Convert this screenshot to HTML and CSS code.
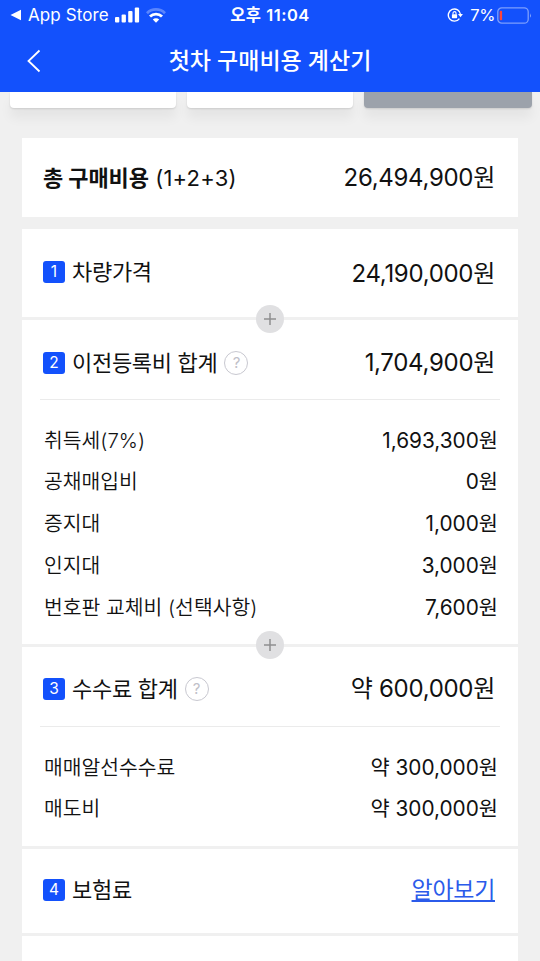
FILE: index.html
```html
<!DOCTYPE html>
<html lang="ko">
<head>
  <meta charset="utf-8">
  <title>첫차 구매비용 계산기</title>
  <link rel="stylesheet" href="styles.css">
</head>

<body>
  <header class="header">
    <div class="status-bar">
      <div class="status-left">
        <svg class="back-app" width="12" height="12" viewBox="0 0 12 12"><path d="M0.5 6L11 0.8V11.2Z" fill="#fff"/></svg>
        <span class="app-name">App Store</span>
        <svg class="signal" width="25" height="16" viewBox="0 0 25 16" fill="#fff">
          <rect x="0" y="10" width="4.3" height="5.5" rx="1"/>
          <rect x="6.6" y="7.5" width="4.3" height="8" rx="1"/>
          <rect x="13.2" y="4" width="4.3" height="11.5" rx="1"/>
          <rect x="19.8" y="0.5" width="4.3" height="15" rx="1"/>
        </svg>
        <svg class="wifi" width="20" height="16" viewBox="0 0 20 16" fill="none" stroke="#fff" stroke-width="2.8">
          <path d="M1 6.2a12.7 12.7 0 0 1 18 0" opacity="0.3"/>
          <path d="M4 9.6a8.4 8.4 0 0 1 12 0"/>
          <path d="M10 15.7l-3.2-3.2a4.6 4.6 0 0 1 6.4 0z" fill="#fff" stroke="none"/>
        </svg>
      </div>
      <div class="status-time">오후 11:04</div>
      <div class="status-right">
        <svg class="lock" width="16" height="16" viewBox="0 0 16 16">
          <path d="M13.5 7.5A6.1 6.1 0 1 0 12.4 11.6" fill="none" stroke="#fff" stroke-width="1.4"/>
          <path d="M11 7h4.9l-2.4 3.2z" fill="#fff"/>
          <rect x="4.9" y="7.2" width="5.2" height="4" rx="0.6" fill="#fff"/>
          <path d="M6 7.4V6.1a1.5 1.5 0 0 1 3 0v1.3" fill="none" stroke="#fff" stroke-width="1.1"/>
        </svg>
        <span class="percent">7%</span>
        <svg class="battery" width="35" height="17" viewBox="0 0 35 17">
          <rect x="0.8" y="0.8" width="30.4" height="15.4" rx="4" fill="none" stroke="#fff" stroke-opacity="0.45" stroke-width="1.3"/>
          <rect x="2.7" y="3.8" width="2.4" height="9.4" rx="1" fill="#ff453a"/>
          <path d="M33 6.2q1.8 2.3 0 4.6z" fill="#fff" opacity="0.5"/>
        </svg>
      </div>
    </div>
    <div class="title-bar">
      <svg class="back" width="14" height="24" viewBox="0 0 14 24"><path d="M12.5 1.5L1.5 12L12.5 22.5" fill="none" stroke="#fff" stroke-width="1.8"/></svg>
      <h1 class="title">첫차 구매비용 계산기</h1>
    </div>
  </header>

  <div class="tabs">
    <div class="tab"></div>
    <div class="tab"></div>
    <div class="tab active"></div>
  </div>

  <main class="content">
    <section class="card total">
      <div class="label"><b>총 구매비용</b> (1+2+3)</div>
      <div class="amount">26,494,900원</div>
    </section>

    <section class="card">
      <div class="card-head price">
        <span class="num">1</span>
        <span class="label">차량가격</span>
        <span class="amount">24,190,000원</span>
      </div>
    </section>

    <section class="card">
      <svg class="plus" width="28" height="28" viewBox="0 0 28 28"><circle cx="14" cy="14" r="14" fill="#e0e0e2"/><path d="M8 14h12M14 8v12" stroke="#8e8e90" stroke-width="1.5"/></svg>
      <div class="card-head">
        <span class="num">2</span>
        <span class="label">이전등록비 합계</span>
        <span class="help">?</span>
        <span class="amount">1,704,900원</span>
      </div>
      <ul class="list">
        <li><span class="name">취득세(7%)</span><span>1,693,300원</span></li>
        <li><span class="name">공채매입비</span><span>0원</span></li>
        <li><span class="name">증지대</span><span>1,000원</span></li>
        <li><span class="name">인지대</span><span>3,000원</span></li>
        <li><span class="name">번호판 교체비 (선택사항)</span><span>7,600원</span></li>
      </ul>
    </section>

    <section class="card">
      <svg class="plus" width="28" height="28" viewBox="0 0 28 28"><circle cx="14" cy="14" r="14" fill="#e0e0e2"/><path d="M8 14h12M14 8v12" stroke="#8e8e90" stroke-width="1.5"/></svg>
      <div class="card-head">
        <span class="num">3</span>
        <span class="label">수수료 합계</span>
        <span class="help">?</span>
        <span class="amount">약 600,000원</span>
      </div>
      <ul class="list">
        <li><span class="name">매매알선수수료</span><span>약 300,000원</span></li>
        <li><span class="name">매도비</span><span>약 300,000원</span></li>
      </ul>
    </section>

    <section class="card">
      <div class="card-head insurance">
        <span class="num">4</span>
        <span class="label">보험료</span>
        <a class="amount link" href="#">알아보기</a>
      </div>
    </section>

    <section class="card last"></section>
  </main>
</body>
</html>
```
FILE: styles.css
```css
* {
  box-sizing: border-box;
}

body {
  margin: 0;
  height: 961px;
  overflow: hidden;
  background-color: #f0f0f0;
  color: #111;
  font-family: Inter, "Noto Sans CJK KR", sans-serif;
}

.header {
  position: relative;
  height: 92px;
  background-color: #1351fc;
  color: #fff;
}

.status-bar {
  display: grid;
  grid-template-columns: 1fr auto 1fr;
  align-items: center;
  height: 30px;
  padding: 0 8px 0 10px;
  font-size: 17px;
  line-height: 30px;
}

.status-left,
.status-right {
  display: flex;
  align-items: center;
}

.status-right {
  justify-content: flex-end;
}

.app-name {
  margin-left: 6px;
  letter-spacing: 0.1px;
}

.signal {
  margin-left: 6px;
}

.wifi {
  margin-left: 6px;
}

.status-time {
  margin-right: 2px;
  font-size: 16.5px;
  font-weight: 600;
  letter-spacing: 0.5px;
}

.percent {
  margin: 0 2px 0 7px;
  font-size: 16.5px;
  letter-spacing: -0.4px;
}

.title-bar {
  display: grid;
  grid-template-columns: 28px 1fr 28px;
  align-items: center;
  height: 62px;
  padding: 0 27px;
}

.title {
  margin: 0;
  font-size: 23px;
  font-weight: 500;
  line-height: 60px;
  text-align: center;
}

.tabs {
  display: grid;
  grid-template-columns: 166px 166px 168px;
  gap: 11px;
  height: 46px;
  padding-left: 9.5px;
}

.tab {
  height: 16px;
  border-radius: 0 0 4px 4px;
  background-color: #fff;
  box-shadow: 0 1px 2px rgba(0, 0, 0, 0.12), 0 10px 12px rgba(0, 0, 0, 0.05);
}

.tab.active {
  background-color: #9ca2ab;
}

.content {
  display: flex;
  flex-direction: column;
  gap: 3px;
  padding: 0 22px;
}

.card {
  position: relative;
  background-color: #fff;
}

.total {
  display: flex;
  align-items: center;
  justify-content: space-between;
  height: 79px;
  margin-bottom: 9px;
  padding: 0 23px 0 21px;
}

.label {
  font-size: 22px;
  line-height: 30px;
  letter-spacing: -0.3px;
  white-space: nowrap;
}

.total .label {
  letter-spacing: 0.2px;
}

.label b {
  font-weight: 700;
  letter-spacing: -0.1px;
}

.amount {
  margin-left: auto;
  font-size: 24px;
  line-height: 30px;
  letter-spacing: -0.3px;
  white-space: nowrap;
}

.card-head {
  display: flex;
  align-items: center;
  height: 80px;
  margin: 0 18px;
  padding: 6px 5px 0 3px;
  border-bottom: 1px solid #ebebeb;
}

.card-head.price {
  height: 88px;
  padding-top: 0;
  padding-bottom: 2px;
  border-bottom: none;
}

.price .amount {
  padding-top: 3px;
}

.card-head.insurance {
  height: 84px;
  padding-top: 0;
  padding-bottom: 1px;
  border-bottom: none;
}

.num {
  width: 22px;
  height: 22px;
  margin-right: 7px;
  border-radius: 3px;
  background-color: #1351fc;
  color: #fff;
  font-size: 15.5px;
  line-height: 22px;
  text-align: center;
}

.help {
  width: 24px;
  height: 24px;
  margin-left: 7px;
  border: 1.5px solid #c8c8d0;
  border-radius: 50%;
  color: #c0c0c8;
  font-size: 15px;
  line-height: 22px;
  text-align: center;
}

.link {
  color: #2b5bea;
  font-size: 23px;
}

.list {
  margin: 0;
  padding: 19.6px 20px 15.4px 22px;
  list-style: none;
}

.list li {
  display: flex;
  justify-content: space-between;
  height: 41.8px;
  font-size: 20.8px;
  line-height: 41.8px;
}

.list .name {
  font-size: 20.4px;
  font-weight: 350;
}

/* sits on the gap between two cards */
.plus {
  position: absolute;
  top: -15.5px;
  left: 50%;
  margin-left: -14px;
}

.last {
  height: 40px;
}
```
